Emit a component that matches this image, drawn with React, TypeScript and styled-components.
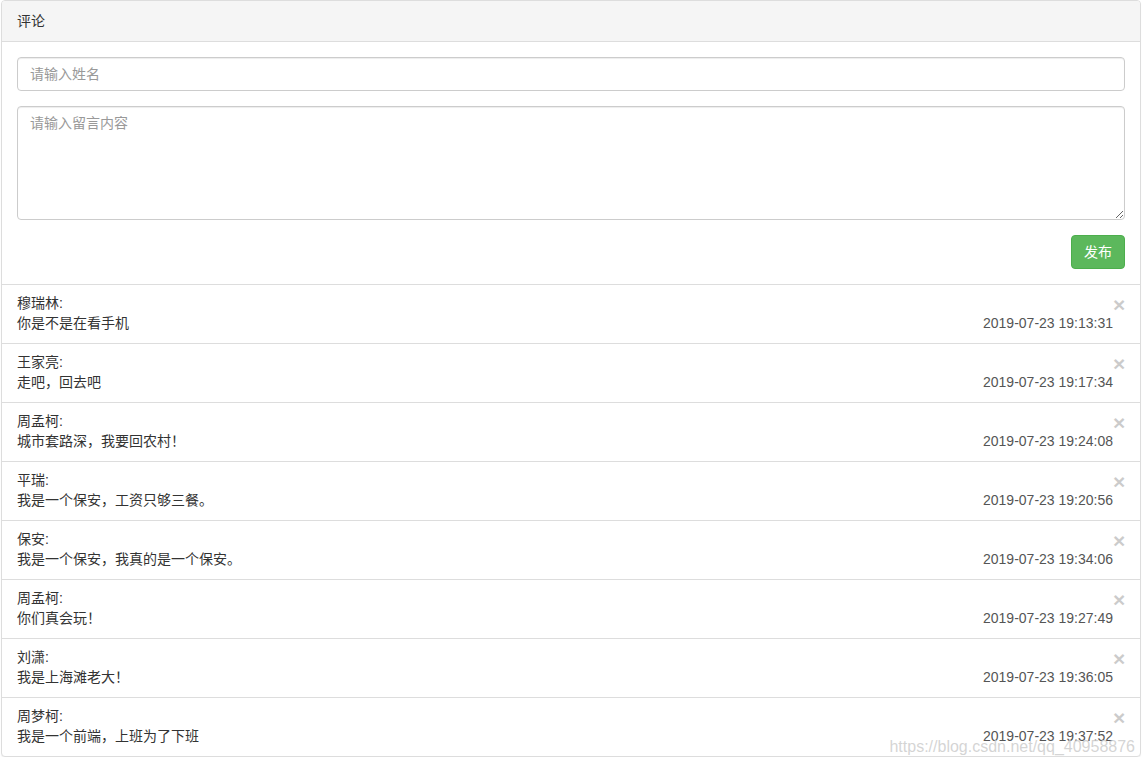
import styled, { createGlobalStyle } from "styled-components";

const GlobalStyle = createGlobalStyle`
  * {
    box-sizing: border-box;
  }
  body {
    margin: 0;
    background: #fff;
    font-family: "Liberation Sans", "Noto Sans CJK SC", Arial, sans-serif;
    font-size: 14px;
    line-height: 20px;
    color: #333;
  }
`;

const Page = styled.div`
  position: relative;
  padding: 0 2px 0 1px;
`;

const Panel = styled.div`
  border: 1px solid #ddd;
  border-radius: 4px;
  background: #fff;
  box-shadow: 0 1px 1px rgba(0, 0, 0, 0.05);
  overflow: hidden;
`;

const PanelHeading = styled.div`
  padding: 10px 15px;
  background: #f5f5f5;
  border-bottom: 1px solid #ddd;
  color: #333;
`;

const PanelBody = styled.div`
  padding: 15px;
  display: flex;
  flex-direction: column;
  gap: 15px;
`;

const Field = styled.input`
  display: block;
  width: 100%;
  height: 34px;
  padding: 6px 12px;
  font: inherit;
  color: #555;
  border: 1px solid #ccc;
  border-radius: 4px;
  box-shadow: inset 0 1px 1px rgba(0, 0, 0, 0.075);
  outline: none;
  &::placeholder {
    color: #999;
  }
`;

const Area = styled.textarea`
  display: block;
  width: 100%;
  height: 114px;
  padding: 6px 12px;
  font: inherit;
  line-height: 20px;
  color: #555;
  border: 1px solid #ccc;
  border-radius: 4px;
  box-shadow: inset 0 1px 1px rgba(0, 0, 0, 0.075);
  outline: none;
  resize: vertical;
  &::placeholder {
    color: #999;
  }
`;

const Actions = styled.div`
  display: flex;
  justify-content: flex-end;
`;

const Button = styled.button`
  height: 34px;
  padding: 6px 12px;
  font: inherit;
  color: #fff;
  background: #5cb85c;
  border: 1px solid #4cae4c;
  border-radius: 4px;
  cursor: pointer;
`;

const List = styled.ul`
  list-style: none;
  margin: 0;
  padding: 0;
`;

const Item = styled.li`
  display: grid;
  grid-template-columns: 1fr auto 12px;
  grid-template-rows: 20px 20px;
  padding: 8px 15px 10px;
  border-top: 1px solid #ddd;
`;

const Name = styled.div`
  grid-column: 1;
  grid-row: 1;
`;

const Message = styled.div`
  grid-column: 1;
  grid-row: 2;
`;

const Time = styled.span`
  grid-column: 2;
  grid-row: 2;
  color: #555;
`;

const Close = styled.button`
  grid-column: 3;
  grid-row: 1 / span 2;
  align-self: start;
  margin: 1px 0 0;
  padding: 0;
  border: 0;
  background: none;
  font-family: "Liberation Sans", Arial, sans-serif;
  font-size: 21px;
  font-weight: bold;
  line-height: 1;
  color: #000;
  opacity: 0.2;
  text-shadow: 0 1px 0 #fff;
  cursor: pointer;
`;

const Watermark = styled.div`
  position: absolute;
  right: 8px;
  bottom: 0;
  font-family: "Liberation Sans", Arial, sans-serif;
  font-size: 16px;
  line-height: 20px;
  color: rgba(205, 205, 205, 0.85);
  pointer-events: none;
`;

const comments = [
  { name: "穆瑞林", text: "你是不是在看手机", time: "2019-07-23 19:13:31" },
  { name: "王家亮", text: "走吧，回去吧", time: "2019-07-23 19:17:34" },
  { name: "周孟柯", text: "城市套路深，我要回农村！", time: "2019-07-23 19:24:08" },
  { name: "平瑞", text: "我是一个保安，工资只够三餐。", time: "2019-07-23 19:20:56" },
  { name: "保安", text: "我是一个保安，我真的是一个保安。", time: "2019-07-23 19:34:06" },
  { name: "周孟柯", text: "你们真会玩！", time: "2019-07-23 19:27:49" },
  { name: "刘潇", text: "我是上海滩老大！", time: "2019-07-23 19:36:05" },
  { name: "周梦柯", text: "我是一个前端，上班为了下班", time: "2019-07-23 19:37:52" },
];

export default function App() {
  return (
    <Page>
      <GlobalStyle />
      <Panel>
        <PanelHeading>评论</PanelHeading>
        <PanelBody>
          <Field placeholder="请输入姓名" />
          <Area placeholder="请输入留言内容" />
          <Actions>
            <Button>发布</Button>
          </Actions>
        </PanelBody>
        <List>
          {comments.map((c, i) => (
            <Item key={i}>
              <Name>{c.name}:</Name>
              <Message>{c.text}</Message>
              <Time>{c.time}</Time>
              <Close>×</Close>
            </Item>
          ))}
        </List>
      </Panel>
      <Watermark>https://blog.csdn.net/qq_40958876</Watermark>
    </Page>
  );
}
